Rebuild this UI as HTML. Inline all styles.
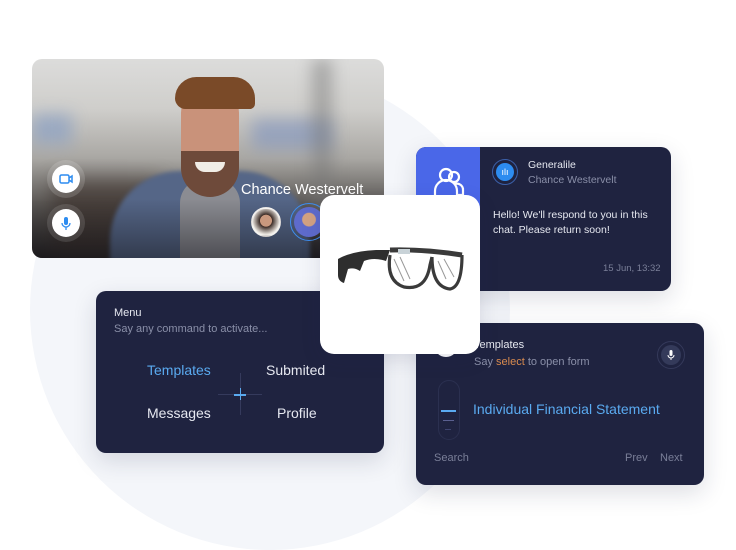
<!DOCTYPE html>
<html><head><meta charset="utf-8"><style>
*{margin:0;padding:0;box-sizing:border-box}
body{width:736px;height:544px;background:#fff;position:relative;overflow:hidden;font-family:"Liberation Sans",sans-serif}
.abs{position:absolute}
.dark{background:#1f2340;border-radius:10px;box-shadow:0 8px 24px rgba(30,35,70,.15)}
</style></head><body>
<div class="abs" style="left:30px;top:70px;width:480px;height:480px;border-radius:50%;background:#f4f6fa"></div>

<!-- photo card -->
<div class="abs" style="left:32px;top:59px;width:352px;height:199px;border-radius:10px;overflow:hidden;background:linear-gradient(180deg,#dcdcdb 0%,#cfcecb 25%,#a9a7a3 50%,#5d5a57 72%,#2a2727 100%)">
 <div class="abs" style="left:0;top:55px;width:40px;height:30px;background:#8aa0c4;filter:blur(8px);opacity:.7"></div>
 <div class="abs" style="left:220px;top:60px;width:80px;height:30px;background:#7f94c0;filter:blur(8px);opacity:.6"></div>
 <div class="abs" style="left:280px;top:0;width:20px;height:170px;background:#777;filter:blur(8px);opacity:.5"></div>
 <div class="abs" style="left:20px;top:120px;width:110px;height:80px;background:#3b2f2a;filter:blur(10px);opacity:.6"></div>
 <div class="abs" style="left:78px;top:112px;width:200px;height:110px;border-radius:70px 70px 0 0;background:#556687;filter:blur(2px)"></div>
 <div class="abs" style="left:148px;top:120px;width:60px;height:90px;background:#8b8c92;border-radius:24px 24px 0 0"></div>
 <div class="abs" style="left:149px;top:32px;width:58px;height:98px;border-radius:24px 24px 32px 32px;background:#c9927a"></div>
 <div class="abs" style="left:149px;top:92px;width:58px;height:46px;border-radius:0 0 30px 30px;background:#6e4a3a"></div>
 <div class="abs" style="left:163px;top:103px;width:30px;height:10px;border-radius:0 0 12px 12px;background:#f1ede6"></div>
 <div class="abs" style="left:143px;top:18px;width:80px;height:32px;border-radius:40px 40px 10px 20px;background:#7a4a28"></div>
 <div class="abs" style="left:0;top:140px;width:352px;height:60px;background:linear-gradient(180deg,rgba(0,0,0,0),rgba(15,15,20,.5))"></div>
 <div class="abs" style="left:20px;top:106px;width:28px;height:28px;border-radius:50%;background:#fff;box-shadow:0 0 0 5px rgba(255,255,255,.15)">
  <svg width="28" height="28"><rect x="8" y="10" width="9" height="8" rx="1.5" fill="none" stroke="#2d8cf0" stroke-width="1.5"/><path d="M17 13l3-2v6l-3-2" fill="none" stroke="#2d8cf0" stroke-width="1.5"/></svg></div>
 <div class="abs" style="left:20px;top:150px;width:28px;height:28px;border-radius:50%;background:#fff;box-shadow:0 0 0 5px rgba(255,255,255,.12)">
  <svg width="28" height="28"><rect x="12" y="8" width="4" height="8" rx="2" fill="#2d8cf0"/><path d="M10 14a4 4 0 008 0M14 18v3" fill="none" stroke="#2d8cf0" stroke-width="1.3"/></svg></div>
 <div class="abs" style="left:209px;top:123px;color:#fff;font-size:14.5px">Chance Westervelt</div>
 <div class="abs" style="left:219px;top:148px;width:30px;height:30px;border-radius:50%;background:radial-gradient(circle at 50% 45%,#c9987e 30%,#3a2a25 32%,#e9e4de 70%);border:2px solid rgba(255,255,255,.5)"></div>
 <div class="abs" style="left:258px;top:144px;width:38px;height:38px;border-radius:50%;border:1.5px solid #3d8ef0;padding:3px"><div style="width:100%;height:100%;border-radius:50%;background:radial-gradient(circle at 50% 42%,#d3a283 28%,#5e6bcc 32%)"></div></div>
</div>

<!-- chat card -->
<div class="abs dark" style="left:416px;top:147px;width:255px;height:144px;overflow:hidden">
 <div class="abs" style="left:0;top:0;width:64px;height:144px;background:#4a67e8"></div>
 <svg class="abs" style="left:14px;top:18px" width="38" height="40"><g fill="none" stroke="#fff" stroke-width="2.2"><circle cx="16" cy="10" r="6"/><circle cx="24" cy="12" r="5"/><path d="M5 32v-6a8 8 0 0122 0v6zM27 30h6v-5a6 6 0 00-8-6"/></g></svg>
 <div class="abs" style="left:76px;top:12px;width:26px;height:26px;border-radius:50%;border:1px solid #3b5fa8;padding:3px"><div style="width:100%;height:100%;border-radius:50%;background:#2d8cf0;color:#fff;font-size:9px;text-align:center;line-height:18px">ılı</div></div>
 <div class="abs" style="left:112px;top:12px;color:#e6e8f0;font-size:10.5px">Generalile</div>
 <div class="abs" style="left:112px;top:27px;color:#8a8fa8;font-size:10.5px">Chance Westervelt</div>
 <div class="abs" style="left:77px;top:61px;color:#e6e8f0;font-size:10.5px;line-height:15px">Hello! We'll respond to you in this<br>chat. Please return soon!</div>
 <div class="abs" style="left:187px;top:116px;color:#7a7f98;font-size:9.5px">15 Jun, 13:32</div>
</div>

<!-- menu card -->
<div class="abs dark" style="left:96px;top:291px;width:288px;height:162px">
 <div class="abs" style="left:18px;top:16px;color:#e6e8f0;font-size:11px">Menu</div>
 <div class="abs" style="left:18px;top:32px;color:#8a8fa8;font-size:11px">Say any command to activate...</div>
 <div class="abs" style="left:51px;top:71px;color:#5aaaf0;font-size:14px">Templates</div>
 <div class="abs" style="left:170px;top:71px;color:#e6e8f0;font-size:14px">Submited</div>
 <div class="abs" style="left:51px;top:114px;color:#e6e8f0;font-size:14px">Messages</div>
 <div class="abs" style="left:181px;top:114px;color:#e6e8f0;font-size:14px">Profile</div>
 <div class="abs" style="left:122px;top:103px;width:44px;height:1px;background:#353a5c"></div>
 <div class="abs" style="left:144px;top:82px;width:1px;height:42px;background:#353a5c"></div>
 <div class="abs" style="left:138px;top:103px;width:12px;height:1.5px;background:#5aaaf0"></div>
 <div class="abs" style="left:143.5px;top:97px;width:1.5px;height:12px;background:#5aaaf0"></div>
</div>

<!-- templates card -->
<div class="abs dark" style="left:416px;top:323px;width:288px;height:162px">
 <div class="abs" style="left:18px;top:10px;width:24px;height:24px;border-radius:50%;background:#fff"><div style="margin:11px 7px;height:2px;background:#1f2340"></div></div>
 <div class="abs" style="left:58px;top:16px;color:#e6e8f0;font-size:11px">Templates</div>
 <div class="abs" style="left:58px;top:33px;color:#8a8fa8;font-size:11px">Say <span style="color:#d98b4f">select</span> to open form</div>
 <div class="abs" style="left:241px;top:18px;width:28px;height:28px;border-radius:50%;border:1px solid #34395a;padding:3px"><div style="width:100%;height:100%;border-radius:50%;background:#343a5a"><svg width="20" height="20"><rect x="8.5" y="5" width="3" height="6" rx="1.5" fill="#fff"/><path d="M7 10a3 3 0 006 0M10 13v2" stroke="#fff" fill="none"/></svg></div></div>
 <div class="abs" style="left:22px;top:57px;width:22px;height:60px;border-radius:11px;border:1px solid #2b3050"></div>
 <div class="abs" style="left:25px;top:87px;width:15px;height:1.5px;background:#5aaaf0"></div>
 <div class="abs" style="left:27px;top:97px;width:11px;height:1px;background:#5a6090"></div>
 <div class="abs" style="left:29px;top:106px;width:6px;height:1px;background:#3f4570"></div>
 <div class="abs" style="left:57px;top:78px;color:#5aaaf0;font-size:14px">Individual Financial Statement</div>
 <div class="abs" style="left:18px;top:129px;color:#7a7f98;font-size:11px">Search</div>
 <div class="abs" style="left:209px;top:129px;color:#7a7f98;font-size:11px">Prev</div>
 <div class="abs" style="left:244px;top:129px;color:#7a7f98;font-size:11px">Next</div>
</div>

<!-- glasses card -->
<div class="abs" style="left:320px;top:195px;width:160px;height:159px;border-radius:14px;background:#fff;box-shadow:0 6px 20px rgba(30,35,70,.12)">
 <svg class="abs" style="left:14px;top:52px" width="134" height="56">
  <path d="M4 12Q18 4 42 3L56 3L52 14Q40 10 30 14L26 24Q20 20 14 22L10 36Q4 34 4 28Z" fill="#2e2e2e"/>
  <path d="M56 3Q90 2 128 8" fill="none" stroke="#3a3a3a" stroke-width="5"/>
  <rect x="64" y="2" width="12" height="5" fill="#c9d3d8"/>
  <g fill="none" stroke="#3a3a3a" stroke-width="3.2" stroke-linejoin="round">
   <path d="M56 8Q52 34 70 40Q92 44 96 18L98 10"/>
   <path d="M98 10Q98 40 116 42Q128 40 128 8"/>
  </g>
  <path d="M60 12L70 34M66 10L76 32M104 14L112 32M110 12L120 30" stroke="#999" stroke-width="1"/>
 </svg>
</div>
</body></html>
